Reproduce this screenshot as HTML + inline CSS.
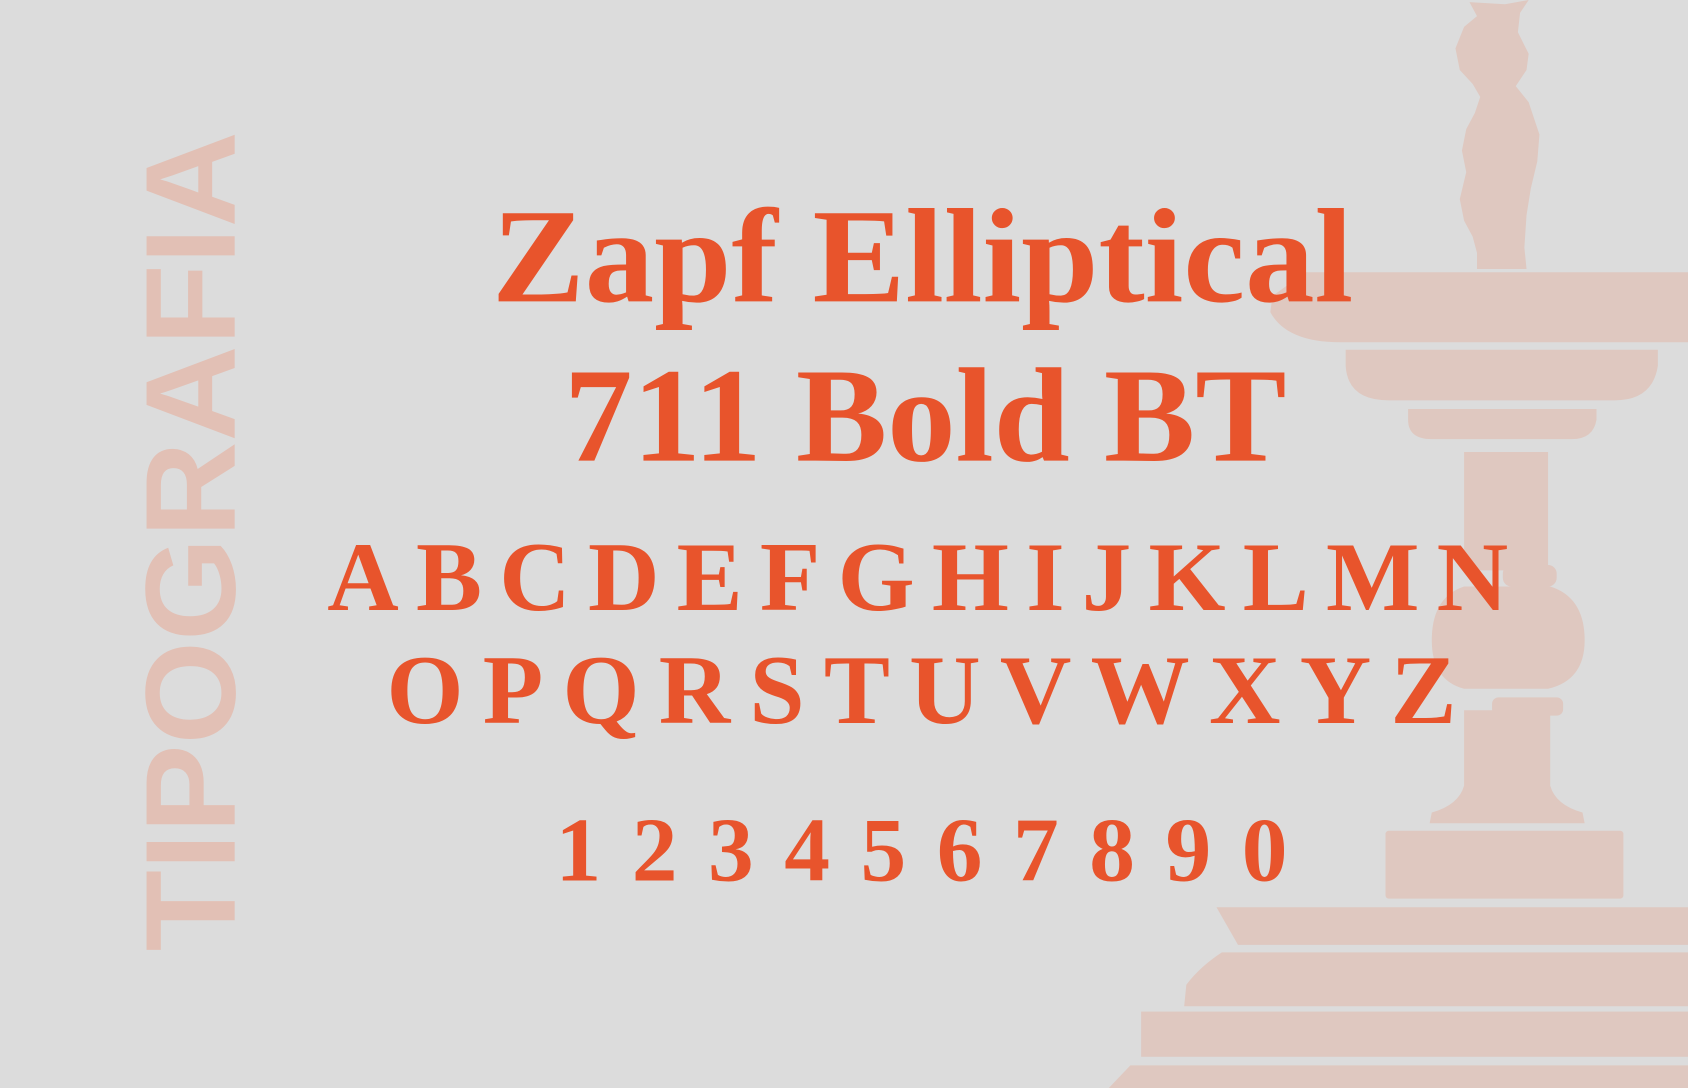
<!DOCTYPE html>
<html><head><meta charset="utf-8"><style>
html,body{margin:0;padding:0;background:#dcdcdc;}
svg{display:block;}
</style></head><body>
<svg width="1688" height="1088" viewBox="0 0 1568 1011" preserveAspectRatio="none" xmlns="http://www.w3.org/2000/svg">
<rect width="1568" height="1011" fill="#dcdcdc"/>
<g fill="#dfc8c0">
<path d="M1365 2 L1398 4 L1420 0 L1412 12 L1410 30 L1420 50 L1418 65 L1408 80 L1420 95 L1430 125 L1428 150 L1422 175 L1418 200 L1416 230 L1418 250 L1372 250 L1372 235 L1368 220 L1360 205 L1356 185 L1362 160 L1358 140 L1362 120 L1370 105 L1375 90 L1368 78 L1356 65 L1352 45 L1360 25 L1372 15 Z"/>
<path d="M1196 253 L1568 253 L1568 318 L1245 318 Q1195 318 1180 290 L1182 275 L1196 265 Z"/>
<path d="M1250 325 L1540 325 L1540 340 Q1535 372 1500 372 L1290 372 Q1252 372 1250 340 Z"/>
<path d="M1308 380 L1483 380 L1483 390 Q1480 408 1460 408 L1330 408 Q1308 408 1308 390 Z"/>
<rect x="1360" y="420" width="78" height="110"/>
<rect x="1396" y="525" width="50" height="20" rx="8"/>
<path d="M1360 545 L1440 545 Q1472 555 1472 595 Q1472 632 1438 640 L1360 640 Q1330 632 1330 595 Q1330 555 1360 545 Z"/>
<rect x="1386" y="648" width="66" height="17" rx="6"/>
<path d="M1360 660 L1440 660 L1440 730 Q1445 748 1470 755 L1472 765 L1328 765 L1330 755 Q1355 748 1360 730 Z"/>
<rect x="1287" y="772" width="221" height="63" rx="3"/>
<path d="M1130 843 L1568 843 L1568 878 L1150 878 Z"/>
<path d="M1135 885 L1568 885 L1568 935 L1100 935 L1102 915 Q1115 898 1135 885 Z"/>
<rect x="1060" y="940" width="508" height="42"/>
<path d="M1050 990 L1568 990 L1568 1011 L1030 1011 Z"/>
</g>
<text transform="translate(218,884) rotate(-90)" x="0" y="0" font-family="Liberation Sans, sans-serif" font-weight="bold" font-size="119" fill="#e2c0b5" textLength="762" lengthAdjust="spacingAndGlyphs">TIPOGRAFIA</text>
<g fill="#e8542c" font-family="Liberation Serif, serif" font-weight="bold">
<text x="457" y="280" font-size="125" textLength="800" lengthAdjust="spacingAndGlyphs">Zapf Elliptical</text>
<text x="524" y="428" font-size="125" textLength="671" lengthAdjust="spacingAndGlyphs">711 Bold BT</text>
<text x="304" y="567" font-size="92" textLength="1097" lengthAdjust="spacing">ABCDEFGHIJKLMN</text>
<text x="359" y="672" font-size="92" textLength="994" lengthAdjust="spacing">OPQRSTUVWXYZ</text>
<text x="516" y="818" font-size="85" textLength="680" lengthAdjust="spacing">1234567890</text>
</g>
</svg>
</body></html>
